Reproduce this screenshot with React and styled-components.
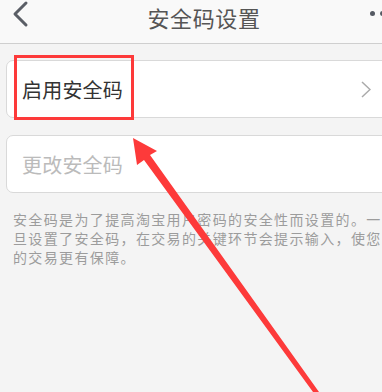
import React from 'react';
import styled, { createGlobalStyle } from 'styled-components';

const GlobalStyle = createGlobalStyle`
  html, body {
    margin: 0;
    padding: 0;
    background: #f4f4f4;
    overflow: hidden;
  }
  body {
    font-family: "Noto Sans CJK SC", "Noto Sans", sans-serif;
  }
`;

const Screen = styled.div`
  position: relative;
  width: 403px;
  height: 392px;
  background: #f4f4f4;
`;

const Header = styled.header`
  height: 43px;
  display: flex;
  align-items: flex-start;
  justify-content: space-between;
  padding: 0 8px 0 10px;
  background: #f9f9f9;
  border-bottom: 1px solid #cfcfcf;
  box-sizing: content-box;
`;

const BackButton = styled.div`
  width: 28px;
  height: 28px;
`;

const Title = styled.h1`
  margin: 4px 0 0;
  font-size: 22px;
  line-height: 26px;
  font-weight: 400;
  color: #555;
  letter-spacing: 0.6px;
`;

const Dots = styled.div`
  display: flex;
  gap: 5px;
  margin-top: 11px;
`;

const Dot = styled.span`
  width: 5px;
  height: 5px;
  border-radius: 50%;
  background: #555a63;
`;

const List = styled.div`
  display: flex;
  flex-direction: column;
  gap: 17px;
  padding: 16px 6px 0;
`;

const Card = styled.div`
  position: relative;
  height: 56px;
  display: flex;
  align-items: center;
  justify-content: space-between;
  padding: 0 25px 0 15px;
  background: #fff;
  border: 1px solid #d9d9d9;
  border-radius: 7px;
`;

const CardLabel = styled.span`
  font-size: 20px;
  color: ${p => (p.$muted ? '#bbb' : '#333')};
  letter-spacing: 0.2px;
`;

const Highlight = styled.div`
  position: absolute;
  left: 7px;
  top: -6px;
  width: 114px;
  height: 59px;
  border: 3px solid #fd3a3a;
`;

const Note = styled.p`
  margin: 17px 13px 0;
  font-size: 14px;
  line-height: 19px;
  letter-spacing: 1.36px;
  color: #9c9c9c;
`;

const Overlay = styled.svg`
  position: absolute;
  left: 0;
  top: 0;
  pointer-events: none;
`;

const App = () => {
  return (
    <Screen>
      <GlobalStyle />
      <Header>
        <BackButton>
          <svg width="28" height="28" viewBox="0 0 28 28">
            <polyline points="16,3 5,14 16,25" fill="none" stroke="#5a5e66" strokeWidth="3" strokeLinecap="round" strokeLinejoin="round" />
          </svg>
        </BackButton>
        <Title>安全码设置</Title>
        <Dots>
          <Dot />
          <Dot />
          <Dot />
        </Dots>
      </Header>
      <List>
        <Card>
          <CardLabel>启用安全码</CardLabel>
          <svg width="10" height="17" viewBox="0 0 10 17">
            <polyline points="1,1 9,8.5 1,16" fill="none" stroke="#aaa" strokeWidth="1.5" />
          </svg>
          <Highlight />
        </Card>
        <Card>
          <CardLabel $muted>更改安全码</CardLabel>
        </Card>
      </List>
      <Note>
        安全码是为了提高淘宝用户密码的安全性而设置的。一旦设置了安全码，在交易的关键环节会提示输入，使您的交易更有保障。
      </Note>
      <Overlay width="403" height="392" viewBox="0 0 403 392">
        <polygon points="133,138 157,151 150,155 319,392 313,392 144,160 137,165" fill="#fd3a3a" />
      </Overlay>
    </Screen>
  );
};

export default App;
